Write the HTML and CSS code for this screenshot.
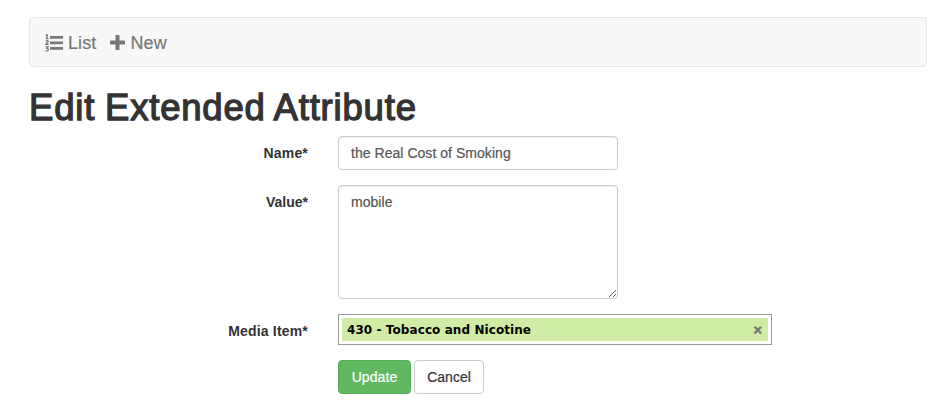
FILE: index.html
```html
<!DOCTYPE html>
<html lang="en"><head><meta charset="utf-8"><title>Edit Extended Attribute</title><link rel="stylesheet" href="styles.css"></head>
<body>
<nav class="navbar">
<a class="nav-link"><svg class="icon-list" width="18" height="18" viewBox="0 0 18 18"><path d="M5 2h13v2.8H5zM5 7.5h13v2.8H5zM5 13h13v2.8H5z"/><path class="digits" d="M.7 1.3 2.1.6v4M.6 4.6h3M.7 7.1Q3.4 6 3.2 7.7L.8 10.4h2.7M.7 12.8h2.4L1.9 14.4q1.6 0 1.4 1.5-.7 1.5-2.7.7"/></svg><span class="list-text">List</span></a>
<a class="nav-link"><svg class="icon-plus" width="15" height="15" viewBox="0 0 15 15"><path d="M6.3 0h2.4q.8 0 .8.8v4.7h4.7q.8 0 .8.8v2.4q0 .8-.8.8H9.5v4.7q0 .8-.8.8H6.3q-.8 0-.8-.8V9.5H.8Q0 9.5 0 8.7V6.3q0-.8.8-.8h4.7V.8q0-.8.8-.8z"/></svg><span class="new-text">New</span></a>
</nav>
<h1><span class="title-text">Edit Extended Attribute</span></h1>
<form class="form">
<div class="row"><label class="name-label" for="name">Name*</label><input id="name" class="control" value="the Real Cost of Smoking"></div>
<div class="row"><label for="value">Value*</label><textarea id="value" class="control area">mobile</textarea></div>
<div class="row"><label class="media-label">Media Item*</label><div class="tokens"><div class="token"><span class="token-text">430 - Tobacco and Nicotine</span><span class="remove">×</span></div></div></div>
<div class="row actions"><span></span><div class="buttons"><button type="button" class="btn primary">Update</button><button type="button" class="btn">Cancel</button></div></div>
</form>
</body></html>
```

FILE: styles.css
```css
* { box-sizing: border-box; }
body { margin: 0; padding: 17px 14px 0 29px; background: #fff; color: #333; font: 14px/20px "Liberation Sans", Arial, sans-serif; }
.navbar { display: flex; gap: 14px; height: 50px; padding: 1px 15px 0; align-items: center; border: 1px solid #e7e7e7; border-radius: 4px; background: #f8f8f8; }
.nav-link { display: flex; align-items: center; gap: 5px; color: #777; font-size: 18px; letter-spacing: .1px; -webkit-text-stroke: .2px #777; }
.nav-link svg { fill: #777; flex: none; }
.icon-plus { margin-top: -1px; }
.nav-link .digits { fill: none; stroke: #777; stroke-width: 1.3; }
h1 { margin: 21px 0 8px; font-size: 36.5px; line-height: 40px; font-weight: 500; letter-spacing: .8px; word-spacing: -1px; -webkit-text-stroke: 1.3px #333; }
.form { display: flex; flex-direction: column; gap: 15px; }
.row { display: grid; grid-template-columns: 279px 434px; column-gap: 30px; align-items: start; }
label { padding-top: 7px; text-align: right; font-weight: 700; }
.name-label, .media-label { letter-spacing: .18px; }
.control { width: 280px; height: 34px; padding: 6px 12px; border: 1px solid #ccc; border-radius: 4px; color: #555; font: inherit; letter-spacing: .04px; box-shadow: inset 0 1px 1px rgba(0,0,0,.075); outline: 0; -webkit-text-stroke: .2px #555; }
.area { display: block; height: 114px; }
.tokens { height: 31px; border: 1px solid #999; padding: 3px; }
.token { display: flex; align-items: center; justify-content: space-between; height: 23px; padding: 0 5px; background: #d1eda5; color: #000; font: bold 12px "DejaVu Sans", sans-serif; letter-spacing: .08px; }
.remove { color: #777; -webkit-text-stroke: .7px #777; }
.buttons { display: flex; gap: 3px; }
.btn { width: 70px; height: 34px; padding: 6px 0; border: 1px solid #ccc; border-radius: 4px; background: #fff; color: #333; font: inherit; -webkit-text-stroke: .2px; }
.primary { width: 73px; letter-spacing: .1px; background: #60b861; border-color: #54ae55; color: #fff; }
```
